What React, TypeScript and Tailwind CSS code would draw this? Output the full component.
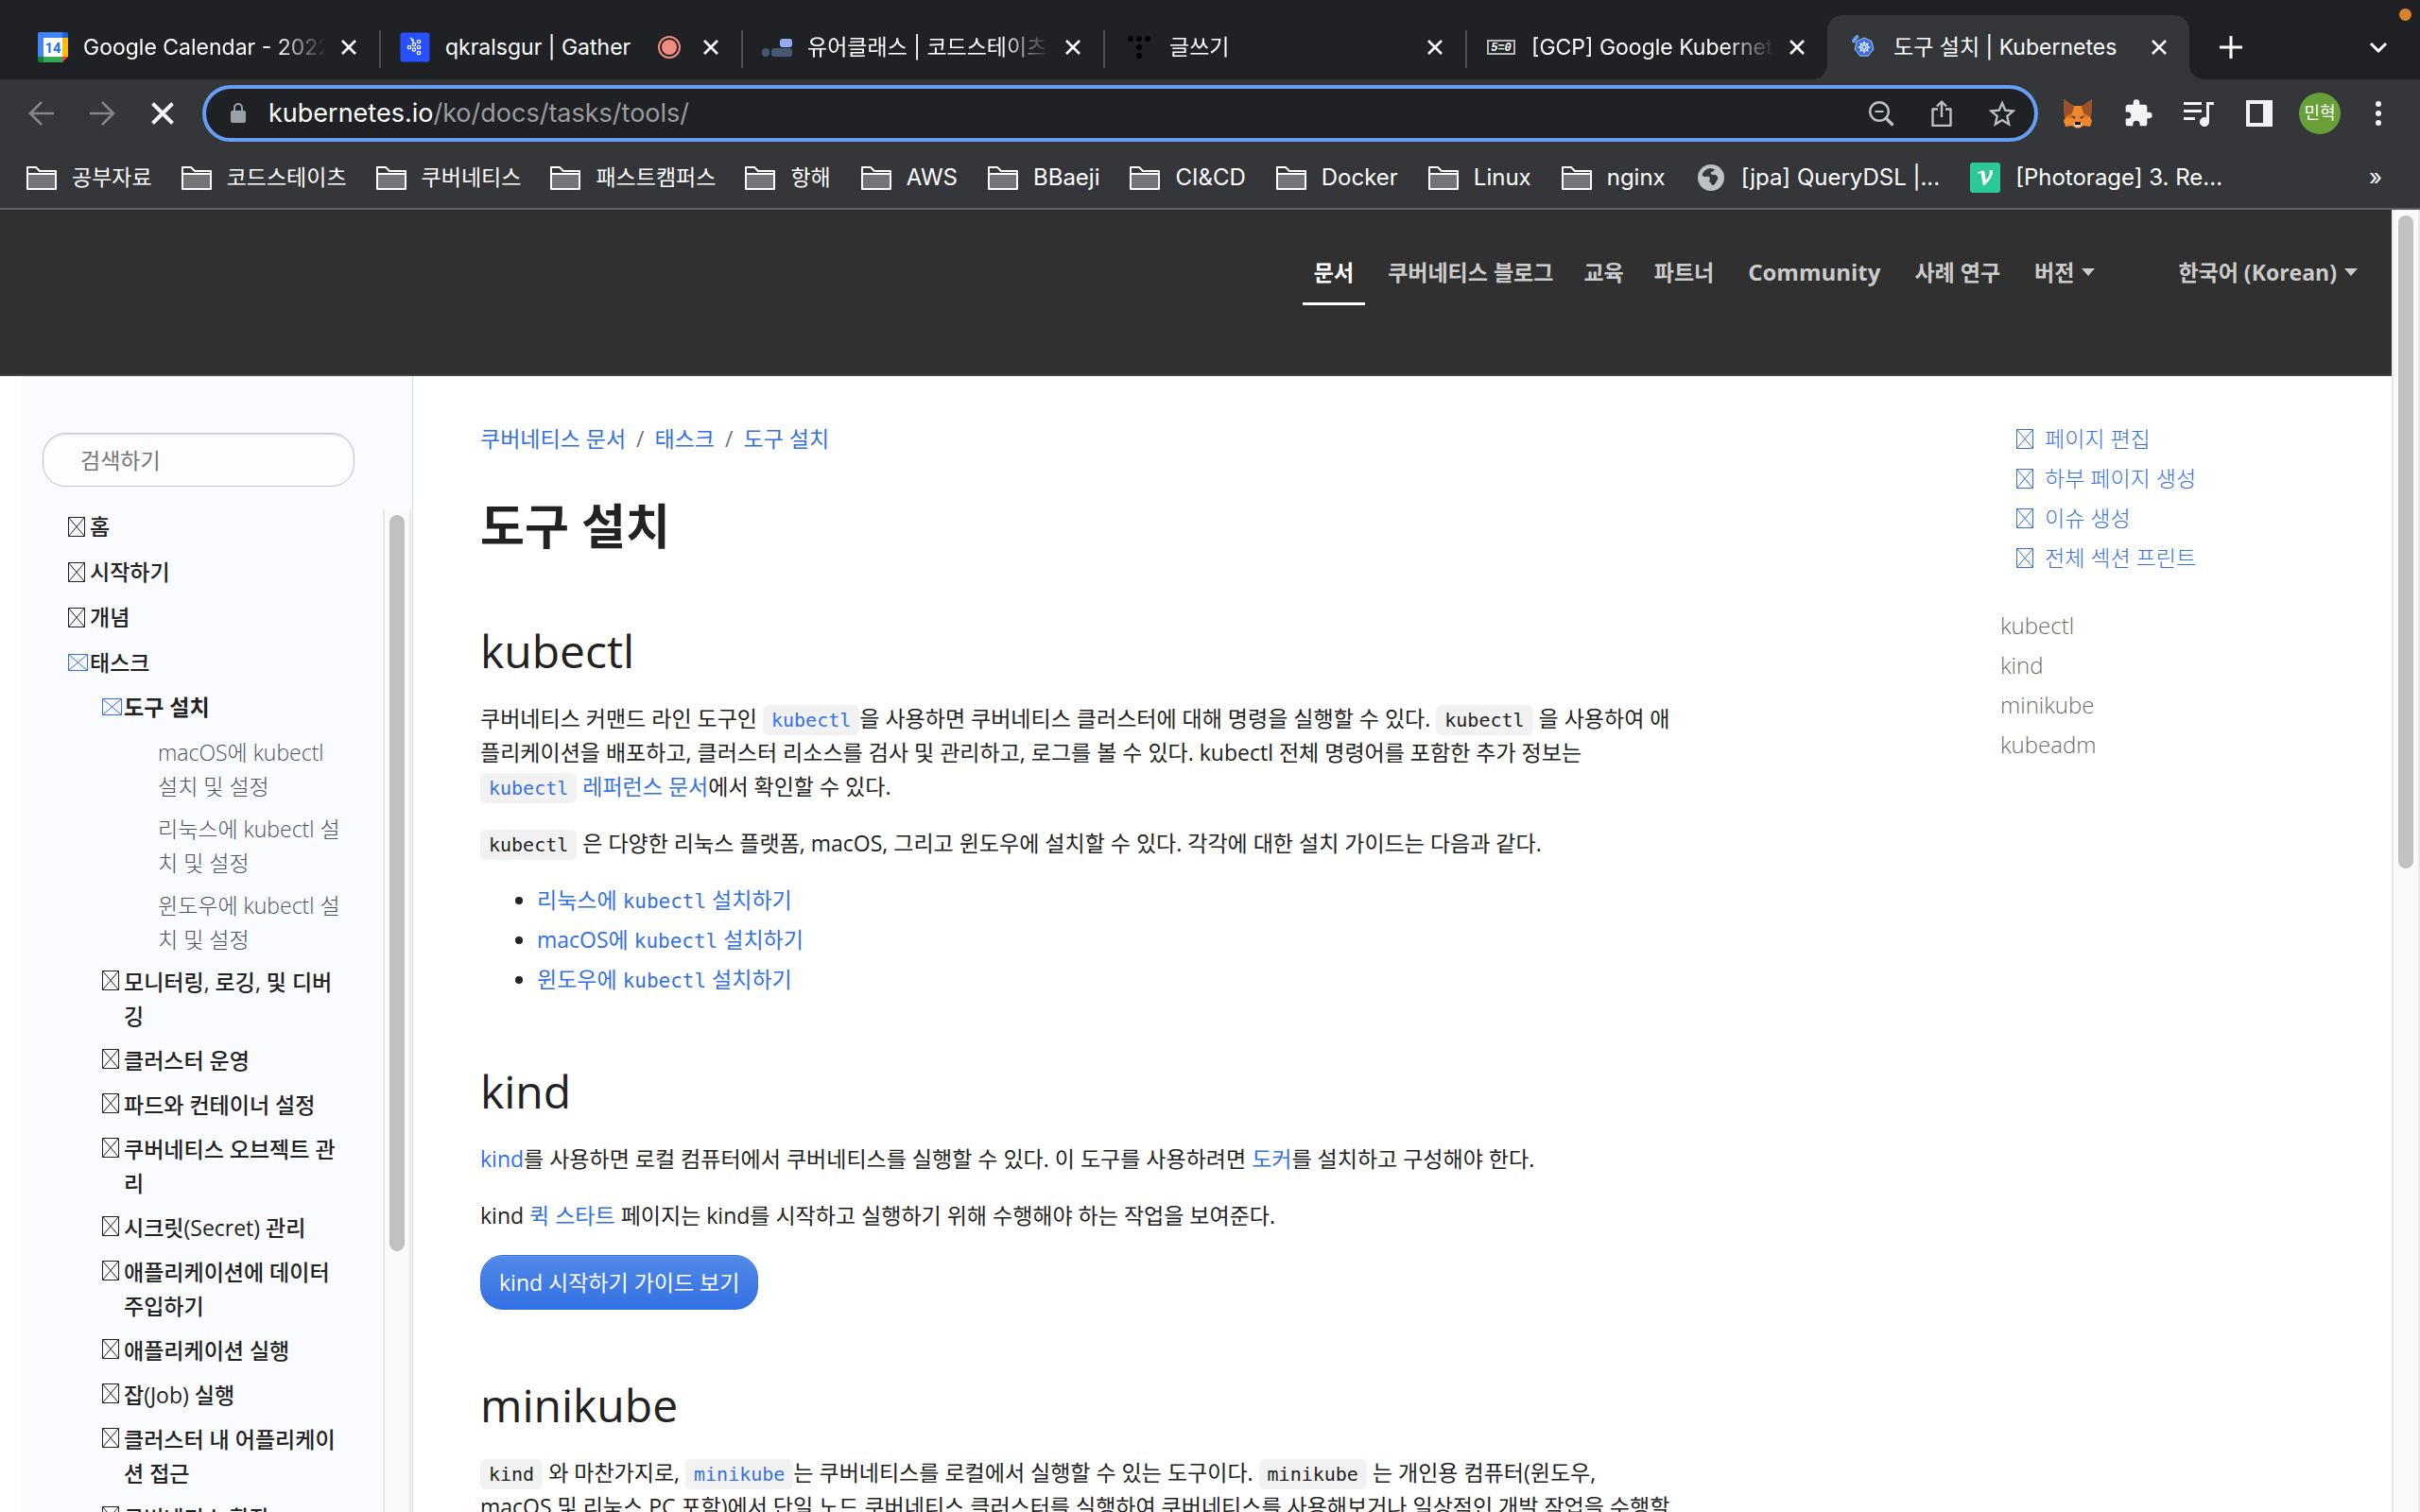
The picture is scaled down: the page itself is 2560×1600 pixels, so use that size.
import type { ReactNode } from "react";

type BoxProps = { wide?: boolean; className?: string };

function Box({ wide, className = "" }: BoxProps) {
  return wide ? (
    <svg aria-hidden="true" className={`h-[18px] w-[21px] shrink-0 ${className}`} viewBox="0 0 21 18" fill="none" stroke="currentColor" strokeWidth="1">
      <path d="M.5.5h20v17H.5zM.5.5l20 17M20.5.5l-20 17" />
    </svg>
  ) : (
    <svg aria-hidden="true" className={`h-[21px] w-[18px] shrink-0 ${className}`} viewBox="0 0 18 21" fill="none" stroke="currentColor" strokeWidth="1">
      <path d="M.5.5h17v20H.5zM.5.5l17 20M17.5.5l-17 20" />
    </svg>
  );
}

function Cross({ size = "h-4 w-4" }: { size?: string }) {
  return (
    <svg aria-hidden="true" className={size} viewBox="0 0 16 16" fill="none" stroke="currentColor" strokeWidth="2.6">
      <path d="M1 1l14 14M15 1L1 15" />
    </svg>
  );
}

const CalendarIcon = (
  <svg className="h-8 w-8" viewBox="0 0 32 32">
    <path d="M2 0h24v6H6v20H0V2a2 2 0 0 1 2-2z" fill="#4285f4" />
    <path d="M26 0h4a2 2 0 0 1 2 2v4h-6z" fill="#1967d2" />
    <path d="M26 6h6v20h-6z" fill="#fbbc04" />
    <path d="M0 26h6v6H2a2 2 0 0 1-2-2z" fill="#188038" />
    <path d="M6 26h20v6H6z" fill="#34a853" />
    <path d="M26 26h6l-6 6z" fill="#ea4335" />
    <path d="M6 6h20v20H6z" fill="#fff" />
    <text x="16" y="21.500" textAnchor="middle" fontFamily="Roboto" fontWeight="700" fontSize="15" fill="#1a73e8">14</text>
  </svg>
);

const GatherIcon = (
  <svg className="h-8 w-8" viewBox="0 0 32 32">
    <rect x="0.500" y="0.500" width="31" height="31" rx="3" fill="#2850ff" />
    <g fill="none" stroke="#fff" strokeWidth="1.300">
      <circle cx="10" cy="16" r="1.700" />
      <circle cx="15" cy="13" r="1.700" />
      <circle cx="20" cy="10" r="1.700" />
      <circle cx="15" cy="18.500" r="1.700" />
      <circle cx="20" cy="16" r="1.700" />
      <circle cx="20" cy="22" r="1.700" />
      <path d="M11 6l3 2v3M14 8l-2 1" />
    </g>
  </svg>
);

const ClassIcon = (
  <svg className="h-8 w-8" viewBox="0 0 32 32">
    <rect x="19" y="7" width="13" height="9" rx="3" fill="#96abee" />
    <rect x="0" y="17" width="8" height="9" rx="4" fill="#475673" />
    <rect x="10" y="17" width="22" height="9" rx="3" fill="#475673" />
  </svg>
);

const TistoryIcon = (
  <svg className="h-8 w-8" viewBox="0 0 32 32" fill="#000">
    <circle cx="7" cy="7" r="3" />
    <circle cx="16" cy="7" r="3" />
    <circle cx="25" cy="7" r="3" />
    <circle cx="16" cy="16" r="3" />
    <circle cx="16" cy="25" r="3" />
  </svg>
);

const ScoreIcon = (
  <svg className="h-8 w-8" viewBox="0 0 32 32">
    <rect x="2" y="9" width="28" height="14" fill="#202124" stroke="#b8b8b8" strokeWidth="2" />
    <text x="16" y="20" textAnchor="middle" fontFamily="Liberation Mono" fontWeight="700" fontStyle="italic" fontSize="12" fill="#fff">5=0</text>
  </svg>
);

const KubernetesIcon = (
  <svg className="h-8 w-8" viewBox="0 0 32 32">
    <path d="M6 9.500A14 14 0 0 1 9.500 5" stroke="#669df6" strokeWidth="4" fill="none" strokeLinecap="round" />
    <path d="M17 6l7.800 3.700 2 8.400-5.400 7h-8.800l-5.400-7 2-8.400z" fill="#326ce5" stroke="#dfe9fb" strokeWidth="0.800" strokeLinejoin="round" />
    <g stroke="#fff" strokeWidth="1.100" fill="none">
      <circle cx="17" cy="16" r="4.200" />
      <path d="M17 9.500v13M10.500 16h13M12.400 11.400l9.200 9.200M21.600 11.400l-9.200 9.200" />
    </g>
    <circle cx="17" cy="16" r="1.200" fill="#326ce5" />
  </svg>
);

type TabData = { title: string; icon: ReactNode; recording?: boolean; active?: boolean };

const tabs: TabData[] = [
  { title: "Google Calendar - 2022", icon: CalendarIcon },
  { title: "qkralsgur | Gather", icon: GatherIcon, recording: true },
  { title: "유어클래스 | 코드스테이츠 학", icon: ClassIcon },
  { title: "글쓰기", icon: TistoryIcon },
  { title: "[GCP] Google Kubernetes", icon: ScoreIcon },
  { title: "도구 설치 | Kubernetes", icon: KubernetesIcon, active: true },
];

function Tab({ title, icon, recording, active }: TabData) {
  return (
    <div
      className={
        active
          ? "relative mt-4 flex w-[383px] min-w-0 items-center rounded-t-2xl bg-[#35363a] pr-6 pl-[22px]"
          : "mt-4 flex w-[383px] min-w-0 items-center pr-6 pl-[22px]"
      }
    >
      {active && (
        <>
          <span className="absolute bottom-0 -left-4 h-4 w-4 bg-[radial-gradient(circle_at_0_0,#202124_16px,#35363a_16px)]" />
          <span className="absolute -right-4 bottom-0 h-4 w-4 bg-[radial-gradient(circle_at_100%_0,#202124_16px,#35363a_16px)]" />
        </>
      )}
      <span className="shrink-0">{icon}</span>
      <span
        className={
          active || recording
            ? "ml-4 flex-1 overflow-hidden whitespace-nowrap"
            : "ml-4 flex-1 overflow-hidden whitespace-nowrap [mask-image:linear-gradient(to_right,#000_calc(100%-52px),transparent)]"
        }
      >
        {title}
      </span>
      {recording && (
        <svg aria-hidden="true" className="mr-2 h-6 w-6 shrink-0" viewBox="0 0 24 24">
          <circle cx="12" cy="12" r="11" fill="none" stroke="#f28b82" strokeWidth="2" />
          <circle cx="12" cy="12" r="8" fill="#f28b82" />
        </svg>
      )}
      <button type="button" aria-label="탭 닫기" className="ml-4 shrink-0">
        <Cross />
      </button>
    </div>
  );
}

function TabStrip() {
  return (
    <div className="relative flex h-[84px] shrink-0 bg-[#202124] pl-[18px] text-[23px] leading-8 text-white">
      {tabs.map((t, i) => (
        <div key={t.title} className="flex min-w-0">
          <Tab {...t} />
          {i < 4 && <span className="-mr-0.5 mt-8 h-10 w-0.5 bg-[#4d4f53]" />}
        </div>
      ))}
      <button type="button" aria-label="새 탭" className="mt-4 ml-8">
        <svg className="h-6 w-6" viewBox="0 0 24 24" stroke="currentColor" strokeWidth="3">
          <path d="M12 0v24M0 12h24" />
        </svg>
      </button>
      <button type="button" aria-label="탭 검색" className="mt-4 mr-[34px] ml-auto">
        <svg className="h-5 w-5" viewBox="0 0 20 20" fill="none" stroke="currentColor" strokeWidth="3">
          <path d="M2 6l8 8 8-8" />
        </svg>
      </button>
      <span className="absolute top-[9px] right-[9px] h-[13px] w-[13px] rounded-full bg-[#d9822b]" />
    </div>
  );
}

function Toolbar() {
  return (
    <div className="flex h-[72px] shrink-0 items-center bg-[#35363a] pr-10 pl-[30px]">
      <button type="button" aria-label="뒤로" className="mr-9 text-[#85868a]">
        <svg className="h-7 w-7" viewBox="0 0 28 28" fill="none" stroke="currentColor" strokeWidth="2.600">
          <path d="M27 14H2M14 2L2 14l12 12" />
        </svg>
      </button>
      <button type="button" aria-label="앞으로" className="mr-9 text-[#85868a]">
        <svg className="h-7 w-7" viewBox="0 0 28 28" fill="none" stroke="currentColor" strokeWidth="2.600">
          <path d="M1 14h25M14 2l12 12-12 12" />
        </svg>
      </button>
      <button type="button" aria-label="로드 중지" className="mr-[30px] ml-0.5 text-[#f1f3f4]">
        <Cross size="h-6 w-6" />
      </button>
      <div className="flex h-[60px] flex-1 items-center rounded-full border-4 border-[#669df6] bg-[#202124] pr-[20px] pl-[26px] text-[#bdc1c6]">
        <svg aria-hidden="true" className="h-[22px] w-4" viewBox="0 0 16 22">
          <rect y="8" width="16" height="13" rx="2" fill="#9aa0a6" />
          <path d="M4 9V5a4 4 0 0 1 8 0v4" fill="none" stroke="#9aa0a6" strokeWidth="2" />
        </svg>
        <a href="#url" className="ml-6 flex-1 text-[27px] leading-9 text-[#9a9b9f]">
          <span className="text-white">kubernetes.io</span>/ko/docs/tasks/tools/
        </a>
        <div className="flex items-center gap-9">
          <button type="button" aria-label="축소">
            <svg className="h-7 w-7" viewBox="0 0 28 28" fill="none" stroke="currentColor" strokeWidth="2.400">
              <circle cx="12" cy="12" r="9.800" />
              <path d="M7.500 12h9" strokeWidth="2" />
              <path d="M19 19l7.500 7.500" strokeWidth="3.200" />
            </svg>
          </button>
          <button type="button" aria-label="공유">
            <svg className="h-7 w-7" viewBox="0 0 28 28" fill="none" stroke="currentColor" strokeWidth="2.400" strokeLinejoin="round">
              <path d="M10 9.500H4.500V27h19V9.500H18M14 18V2M9 6.500l5-5 5 5" />
            </svg>
          </button>
          <button type="button" aria-label="북마크">
            <svg className="h-7 w-7" viewBox="0 0 28 28" fill="none" stroke="currentColor" strokeWidth="2.300">
              <path d="M14 3l3.200 7.700 8.500.8-6.400 5.500 1.900 8.500L14 21l-7.200 4.500 1.900-8.500-6.400-5.500 8.500-.8z" />
            </svg>
          </button>
        </div>
      </div>
      <div className="ml-[26px] flex items-center gap-8 text-[#f1f3f4]">
        <button type="button" aria-label="MetaMask">
          <svg className="h-8 w-8" viewBox="0 0 32 32">
            <path d="M1 1l10 7h10l10-7v12l-2 7 2 4-2 6-7-1-4 2.500h-4L10 29l-7 1-2-6 2-4-2-7z" fill="#f0872c" />
            <path d="M1 1l11 8-2 7-8 4-1-7zM31 1L20 9l2 7 8 4 1-7z" fill="#9a5228" />
            <path d="M2 20l7-3 2 4zM30 20l-7-3-2 4z" fill="#d96d1f" />
            <path d="M9 18l5 2-2 2zM23 18l-5 2 2 2z" fill="#3a3f4a" />
            <path d="M11 26h10l-2.500 4.500h-5z" fill="#e0cfc4" />
            <path d="M13 25h6v3h-6z" fill="#161616" />
          </svg>
        </button>
        <button type="button" aria-label="확장 프로그램">
          <svg className="h-8 w-8" viewBox="0 0 24 24" fill="currentColor">
            <path d="M20.500 11H19V7a2 2 0 0 0-2-2h-4V3.500a2.500 2.500 0 0 0-5 0V5H4a2 2 0 0 0-2 2v3.800h1.500a2.700 2.700 0 0 1 0 5.400H2V20a2 2 0 0 0 2 2h3.800v-1.500a2.700 2.700 0 0 1 5.400 0V22H17a2 2 0 0 0 2-2v-4h1.500a2.500 2.500 0 0 0 0-5z" />
          </svg>
        </button>
        <button type="button" aria-label="미디어 제어">
          <svg className="h-8 w-8" viewBox="0 0 32 32" fill="currentColor">
            <path d="M0 4h19v3H0zM0 12h19v3H0zM0 20h12v3H0zM24 4h8v3h-5v18a5 5 0 1 1-3-4.600z" />
          </svg>
        </button>
        <button type="button" aria-label="측면 패널">
          <svg className="h-8 w-8" viewBox="0 0 32 32">
            <path fillRule="evenodd" d="M2 2h28v28H2zm4 4v20h14V6z" fill="currentColor" />
          </svg>
        </button>
        <button type="button" className="-mx-1.5 flex h-11 w-11 items-center justify-center rounded-full bg-[#689f38] text-[18px] leading-6 text-white">민혁</button>
        <button type="button" aria-label="메뉴" className="ml-2.5">
          <svg className="h-8 w-2" viewBox="0 0 8 32" fill="currentColor">
            <circle cx="4" cy="6" r="3" />
            <circle cx="4" cy="16" r="3" />
            <circle cx="4" cy="26" r="3" />
          </svg>
        </button>
      </div>
    </div>
  );
}

function Folder() {
  return (
    <svg aria-hidden="true" className="h-8 w-8" viewBox="0 0 32 32">
      <path d="M1 12h30v16H1z" fill="#727376" />
      <path d="M1 27V5h9l4 4h17v19H1zM1 12h30" fill="none" stroke="#fff" strokeWidth="2" strokeLinejoin="round" />
    </svg>
  );
}

const koreanFolders = ["공부자료", "코드스테이츠", "쿠버네티스", "패스트캠퍼스", "항해"];
const latinFolders = ["AWS", "BBaeji", "CI&CD", "Docker", "Linux", "nginx"];

function Bookmarks() {
  return (
    <nav aria-label="북마크바" className="flex h-[66px] shrink-0 items-center gap-8 border-b-2 border-[#5f6064] bg-[#35363a] pr-10 pl-7 text-[24px] leading-8 whitespace-nowrap text-white">
      <div className="flex items-center gap-[31px] text-[23px]">
        {koreanFolders.map((f) => (
          <a key={f} href="#folder" className="flex items-center gap-4">
            <Folder />
            {f}
          </a>
        ))}
      </div>
      {latinFolders.map((f) => (
        <a key={f} href="#folder" className="flex items-center gap-4">
          <Folder />
          {f}
        </a>
      ))}
      <a href="#querydsl" className="flex items-center gap-4">
        <svg aria-hidden="true" className="h-8 w-8" viewBox="0 0 32 32">
          <circle cx="16" cy="16" r="14" fill="#bdc1c6" />
          <path d="M15 6c-6 1-9 6-8 8 3 2 5 0 7 1 2 2-1 4 1 6 2 1 1 3 3 3 3-1 3-4 5-6 1-3-1-5-4-5-3 0-4-1-3-3 2 0 3-1 4-3z" fill="#35363a" />
        </svg>
        [jpa] QueryDSL |...
      </a>
      <a href="#photorage" className="flex items-center gap-4">
        <svg aria-hidden="true" className="h-8 w-8" viewBox="0 0 32 32">
          <rect width="32" height="32" rx="3" fill="#2dc897" />
          <path d="M8 10.500l5.500-2c1-.3 1.500 0 1.700 1l1.600 9.500c2.500-3 4.200-6 4-8.500 0-1-.2-1.500-.8-2l3.500-.5c.8 1.500.5 4-.8 6.700-1.600 3.300-4.300 6.500-7.500 9.300h-1.400l-2.300-13-3 .8z" fill="#fff" />
        </svg>
        [Photorage] 3. Re...
      </a>
      <button type="button" aria-label="더 보기" className="ml-auto">»</button>
    </nav>
  );
}

function Caret() {
  return (
    <svg aria-hidden="true" className="h-2 w-3.5" viewBox="0 0 14 8" fill="currentColor">
      <path d="M0 0h14L7 8z" />
    </svg>
  );
}

function SiteHeader() {
  return (
    <header className="flex h-44 shrink-0 justify-end border-b-2 border-[#444] bg-[#303030] pr-9 text-[23px] leading-9 font-bold whitespace-nowrap text-[#cbcbcb]">
      <nav className="mt-12 flex items-start">
        <a href="#docs" className="border-b-3 border-white px-3 pb-[14px] text-white">문서</a>
        <a href="#blog" className="ml-6">쿠버네티스 블로그</a>
        <a href="#training" className="ml-8">교육</a>
        <a href="#partners" className="ml-8">파트너</a>
        <a href="#community" className="ml-9 text-[24px]">Community</a>
        <a href="#cases" className="ml-9">사례 연구</a>
        <button type="button" className="ml-9 flex items-center gap-2">버전<Caret /></button>
        <button type="button" className="ml-[88px] flex items-center gap-2">한국어 (Korean)<Caret /></button>
      </nav>
    </header>
  );
}

const topItems = ["홈", "시작하기", "개념"];
const leafItems = ["macOS에 kubectl 설치 및 설정", "리눅스에 kubectl 설치 및 설정", "윈도우에 kubectl 설치 및 설정"];
const subItems = [
  "모니터링, 로깅, 및 디버깅",
  "클러스터 운영",
  "파드와 컨테이너 설정",
  "쿠버네티스 오브젝트 관리",
  "시크릿(Secret) 관리",
  "애플리케이션에 데이터 주입하기",
  "애플리케이션 실행",
  "잡(Job) 실행",
  "클러스터 내 어플리케이션 접근",
  "쿠버네티스 확장",
];

function Sidebar() {
  return (
    <aside className="ml-[23px] flex w-[414px] shrink-0 flex-col border-r border-[#d9dee3] bg-[#fafbff]">
      <input
        type="search"
        aria-label="검색하기"
        placeholder="검색하기"
        className="mt-15 ml-[22px] h-[57px] w-[330px] shrink-0 rounded-[24px] border border-[#c4c4c4] bg-[#fcfdff] pl-[39px] text-[23px] text-[#222] shadow-[inset_0_1px_2px_rgba(0,0,0,0.15)] placeholder:text-[#757575]"
      />
      <div className="mt-6 flex min-h-0 flex-1">
        <nav className="min-w-0 flex-1 overflow-hidden pr-9 pl-[49px] text-[23px] leading-9 font-medium text-[#222]">
          <ul>
            {topItems.map((t) => (
              <li key={t} className="pb-3">
                <a href="#nav" className="flex items-center gap-[5px]"><Box />{t}</a>
              </li>
            ))}
            <li className="pb-[11px]">
              <a href="#nav" className="flex items-center gap-[2px]"><Box wide className="text-[#3371e3]" />태스크</a>
            </li>
          </ul>
          <ul className="pl-9">
            <li className="pb-[9px]">
              <a href="#nav" className="flex items-center gap-[2px] font-bold"><Box wide className="text-[#3371e3]" />도구 설치</a>
              <ul className="mt-3 flex flex-col gap-[9px] pl-[59px] font-light text-[#4c545c]">
                {leafItems.map((t) => (
                  <li key={t}><a href="#nav" className="block">{t}</a></li>
                ))}
              </ul>
            </li>
            {subItems.map((t) => (
              <li key={t} className="pb-[11px]">
                <a href="#nav" className="flex items-start gap-[5px]"><Box className="mt-1.5" /><span className="min-w-0">{t}</span></a>
              </li>
            ))}
          </ul>
        </nav>
        <div className="mr-px w-[30px] shrink-0 border-x-2 border-[#e8e8e8] bg-[#fafafa] pt-1.5">
          <div className="mx-auto h-[779px] w-4 rounded-full bg-[#c1c1c1]" />
        </div>
      </div>
    </aside>
  );
}

function Code({ children }: { children: ReactNode }) {
  return (
    <code className="rounded-md bg-[#f2f2f2] px-[9px] py-1 font-['DejaVu_Sans_Mono',monospace] text-[20px] leading-6">{children}</code>
  );
}

function Link({ children }: { children: ReactNode }) {
  return <a href="#link" className="text-[#3371e3]">{children}</a>;
}

function H2({ children }: { children: ReactNode }) {
  return <h2 className="text-[48px] leading-[58px]">{children}</h2>;
}

function Main() {
  return (
    <main className="min-w-0 flex-1 pt-12 pl-[71px] text-[23px] leading-9 text-[#222]">
      <nav aria-label="breadcrumb" className="flex gap-[11px]">
        <Link>쿠버네티스 문서</Link>
        <span className="text-[#6c757d]">/</span>
        <Link>태스크</Link>
        <span className="text-[#6c757d]">/</span>
        <Link>도구 설치</Link>
      </nav>
      <div className="w-[1264px] max-w-full">
        <h1 className="mt-[38px] text-[51px] leading-[72px] font-bold">도구 설치</h1>
        <section className="mt-[68px]">
          <H2>kubectl</H2>
          <p className="mt-6">
            쿠버네티스 커맨드 라인 도구인 <Link><Code>kubectl</Code></Link>을 사용하면 쿠버네티스 클러스터에 대해 명령을 실행할 수 있다. <Code>kubectl</Code> 을 사용하여 애플리케이션을 배포하고, 클러스터 리소스를 검사 및 관리하고, 로그를 볼 수 있다. kubectl 전체 명령어를 포함한 추가 정보는 <Link><Code>kubectl</Code> 레퍼런스 문서</Link>에서 확인할 수 있다.
          </p>
          <p className="mt-6">
            <Code>kubectl</Code> 은 다양한 리눅스 플랫폼, macOS, 그리고 윈도우에 설치할 수 있다. 각각에 대한 설치 가이드는 다음과 같다.
          </p>
          <ul className="mt-6 flex list-disc flex-col gap-[6px] pl-[60px]">
            {["리눅스에", "macOS에", "윈도우에"].map((t) => (
              <li key={t}>
                <Link>{t} <code className="font-['DejaVu_Sans_Mono',monospace] text-[21px] leading-6">kubectl</code> 설치하기</Link>
              </li>
            ))}
          </ul>
        </section>
        <section className="mt-[72px]">
          <H2>kind</H2>
          <p className="mt-6">
            <Link>kind</Link>를 사용하면 로컬 컴퓨터에서 쿠버네티스를 실행할 수 있다. 이 도구를 사용하려면 <Link>도커</Link>를 설치하고 구성해야 한다.
          </p>
          <p className="mt-6">
            kind <Link>퀵 스타트</Link> 페이지는 kind를 시작하고 실행하기 위해 수행해야 하는 작업을 보여준다.
          </p>
          <a href="#guide" className="mt-6 inline-block rounded-[24px] border border-[#3371e3] bg-gradient-to-b from-[#5289e7] to-[#3371e3] px-[19px] py-2.5 text-white shadow-[inset_0_1px_0_rgba(255,255,255,0.15)]">
            kind 시작하기 가이드 보기
          </a>
        </section>
        <section className="mt-[72px]">
          <H2>minikube</H2>
          <p className="mt-6">
            <Code>kind</Code> 와 마찬가지로, <Link><Code>minikube</Code></Link>는 쿠버네티스를 로컬에서 실행할 수 있는 도구이다. <Code>minikube</Code> 는 개인용 컴퓨터(윈도우,<br />macOS 및 리눅스 PC 포함)에서 단일 노드 쿠버네티스 클러스터를 실행하여 쿠버네티스를 사용해보거나 일상적인 개발 작업을 수행할 수 있다.
          </p>
        </section>
      </div>
    </main>
  );
}

function PageAside() {
  return (
    <aside className="w-[414px] shrink-0 pt-[45px] text-[23px] leading-[42px] font-light">
      <ul className="pl-[17px] text-[#3371e3]">
        {["페이지 편집", "하부 페이지 생성", "이슈 생성", "전체 섹션 프린트"].map((t) => (
          <li key={t}><a href="#action" className="flex items-center gap-3"><Box />{t}</a></li>
        ))}
      </ul>
      <ul className="mt-[30px] text-[24px] text-[#6c6c6c]">
        {["kubectl", "kind", "minikube", "kubeadm"].map((t) => (
          <li key={t}><a href="#toc">{t}</a></li>
        ))}
      </ul>
    </aside>
  );
}

export default function App() {
  return (
    <div className="flex h-screen flex-col overflow-hidden bg-white font-['Inter','Noto_Sans_CJK_KR',sans-serif]">
      <TabStrip />
      <Toolbar />
      <Bookmarks />
      <div className="flex min-h-0 flex-1 font-['Open_Sans','Noto_Sans_CJK_KR',sans-serif]">
        <div className="flex min-w-0 flex-1 flex-col">
          <SiteHeader />
          <div className="flex min-h-0 flex-1 overflow-hidden">
            <Sidebar />
            <Main />
            <PageAside />
          </div>
        </div>
        <div className="w-[30px] shrink-0 border-x-2 border-[#e8e8e8] bg-[#fafafa] pt-1.5">
          <div className="mx-auto h-[691px] w-4 rounded-full bg-[#c1c1c1]" />
        </div>
      </div>
    </div>
  );
}
